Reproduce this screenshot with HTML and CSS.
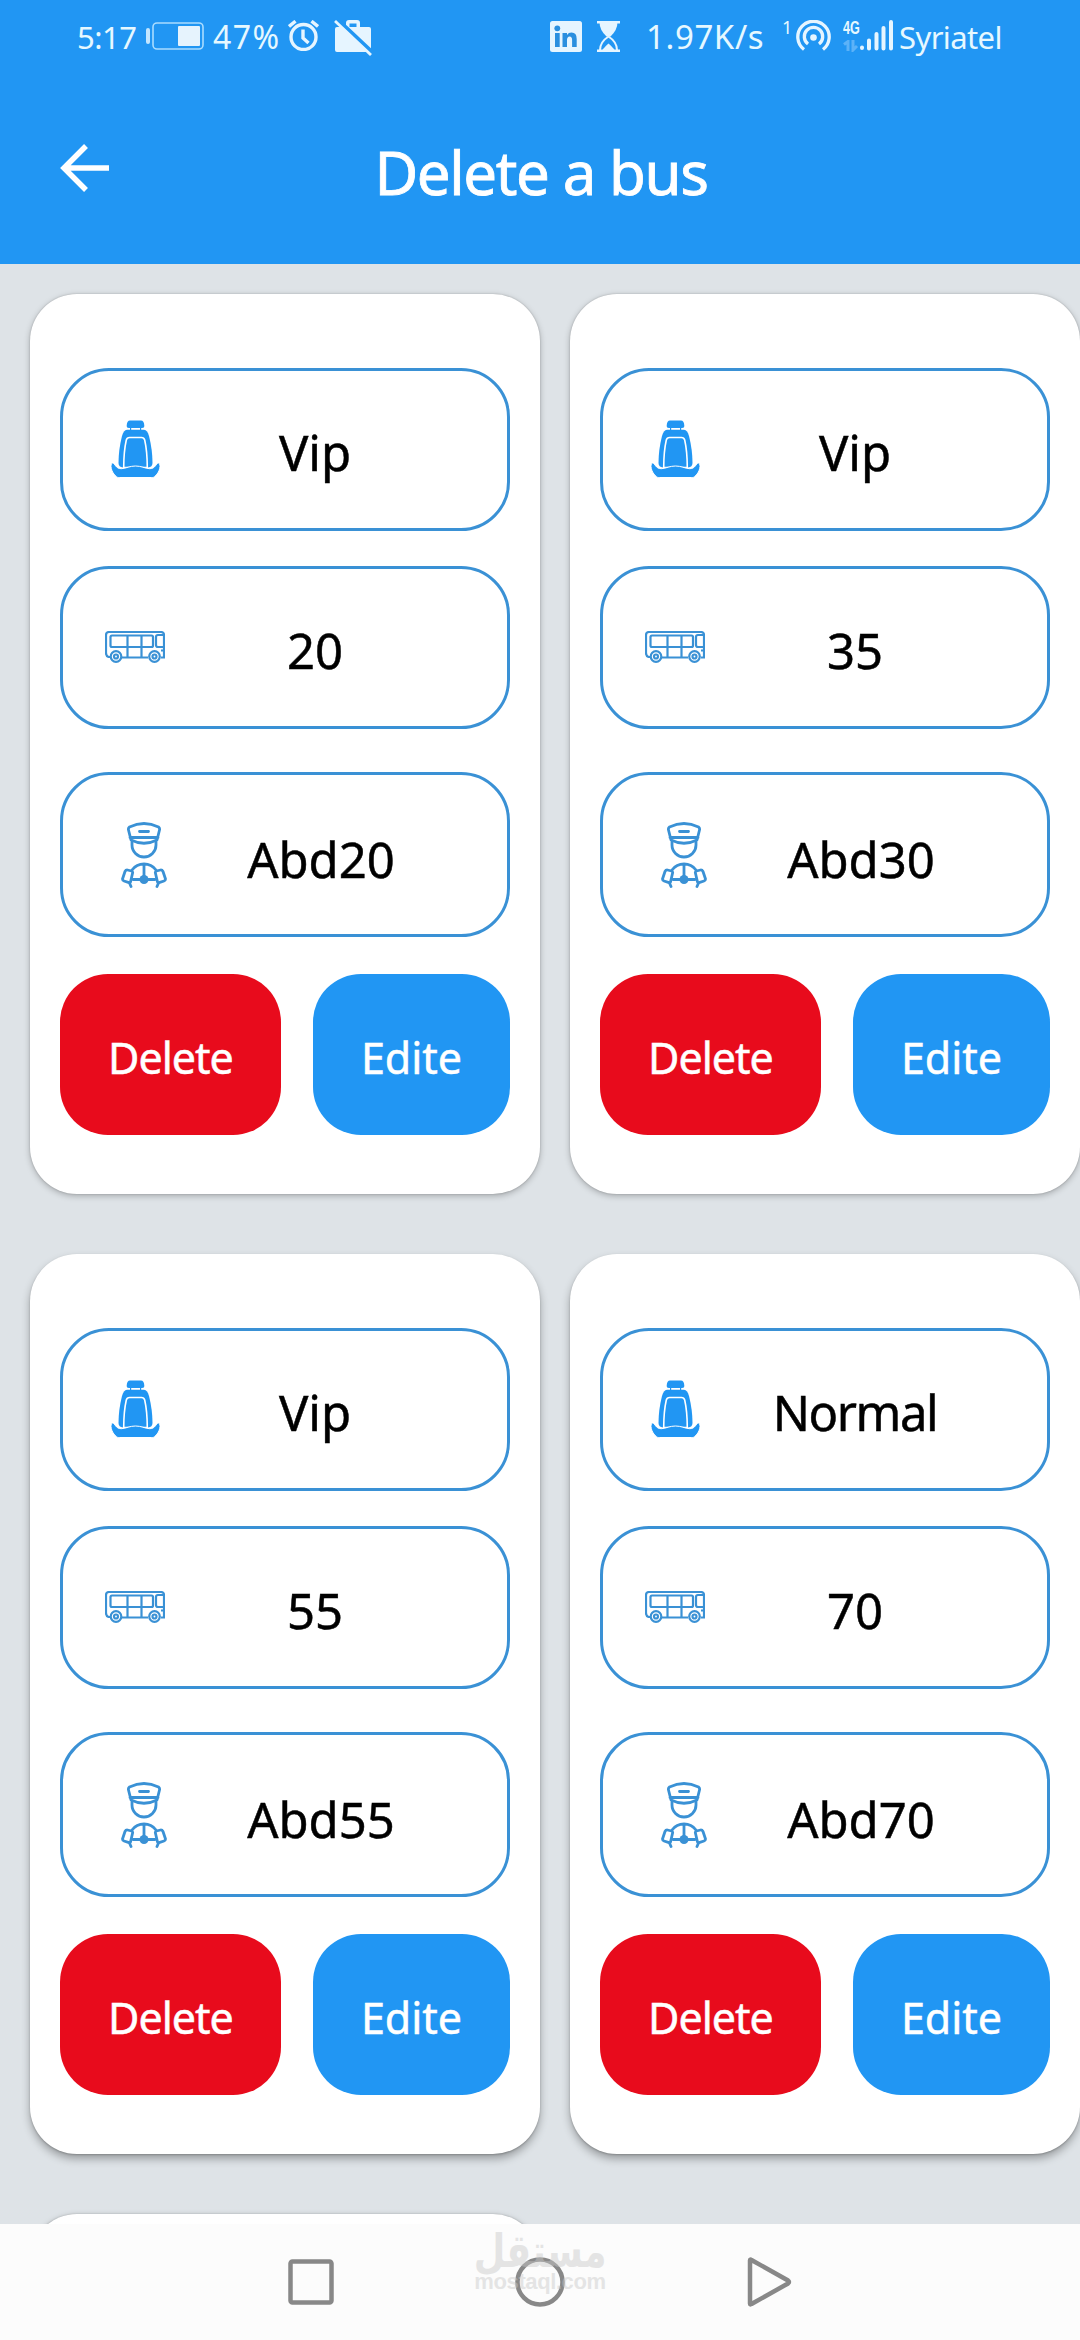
FILE: index.html
```html
<!DOCTYPE html>
<html lang="en">
<head>
  <meta charset="UTF-8" />
  <meta name="viewport" content="width=device-width, initial-scale=1.0"/>
  <title>Delete a bus</title>
  <link rel="stylesheet" href="styles.css">
</head>
<body>
  <!-- shared icons -->
  <svg class="sprite">
    <symbol id="seat" viewBox="0 0 49 58">
      <path d="M19 .5h11q3 0 3.300 5 .2 2.500-2.300 2.500h-13q-2.500 0-2.300-2.500.3-5 3.300-5z"/>
      <path d="M19 7h1.200v3H19zM29 7h1.200v3H29z"/>
      <path d="M16 9.700h17q3.500.3 5 6.300 3.500 14 3.500 27 0 4-4.500 4.500H12Q7.500 47 7.500 43q0-13 3.500-27 1.500-6 5-6.300z"/>
      <path d="M18.500 17.500h12q2.500 0 3.200 2.500 2.500 11 2.600 27.500H12.700q.1-16.500 2.600-27.500.7-2.500 3.200-2.500z" stroke="#fff" stroke-width="1.600"/>
      <path d="M1.500 43c2.500 0 3 6 9 5.700 5-.4 8-2.700 14-2.700s9 2.300 14 2.700c6 .3 6.500-5.700 9-5.700 3 1 1.500 9.500-4 13.700-1 .8-1.500.8-3 .8h-32c-1.500 0-2 0-3-.8-5.500-4.200-7-12.700-4-13.700z" stroke="#fff" stroke-width="1"/>
    </symbol>
    <symbol id="bus" viewBox="0 0 60 32">
      <g fill="none" stroke="currentColor" stroke-width="2.200">
        <path d="M5 26H3.500Q1 25 1 22V4q0-3 3-3h52q3 0 3 3v22.500h-3M16 26.500h27"/>
        <path d="M7 4.500h39.500q1.500 0 1.500 1.500v8.500q0 1.500-1.500 1.500H7q-1.500 0-1.500-1.500V6q0-1.500 1.500-1.500zM22.500 4.500v22M36.500 4.500v22M59 4h-6q-2 0-2 2v8q0 2 2 2h6M59 19.500h-3"/>
        <circle cx="11" cy="25.500" r="5.300"/><circle cx="11" cy="25.500" r="2"/>
        <circle cx="49.500" cy="25.500" r="5.300"/><circle cx="49.500" cy="25.500" r="2"/>
      </g>
    </symbol>
    <symbol id="driver" viewBox="0 0 46 66">
      <g fill="none" stroke="currentColor" stroke-width="2.800" stroke-linecap="round" stroke-linejoin="round">
        <path d="M8.500 5q14.500-7 29 0 1.500 1 1 3l-2.500 10q-13 6.500-26 0L7.500 8q-.5-2 1-3zM9 15.500h28M18.500 9.500h9"/>
        <path d="M11 20v3a12 12 0 0 0 24 0V20"/>
        <path d="M11 48a15 15 0 0 1 24 0M23 42v15M12 57.500h22"/>
        <path d="M6.500 48l4 1q1.200.3 1.200 1.500L9.500 60q-.4 1-1.500.7L3 59q-1.500-.5-1.500-2L4 49.500q1-1.800 2.500-1.500zM39.500 48l-4 1q-1.200.3-1.200 1.500l2.200 9.500q.4 1 1.500.7L43 59q1.500-.5 1.500-2L42 49.500q-1-1.800-2.500-1.500zM8.500 61l1.500 3.500M37.500 61 36 64.500"/>
      </g>
      <circle cx="23" cy="57.500" r="4.500"/>
    </symbol>
  </svg>

  <div class="statusbar">
    <span class="clock">5:17</span>
    <svg class="battery" width="58" height="28" viewBox="0 0 58 28">
      <rect x="0" y="6" width="4" height="16" rx="2" fill="#c3e6ff"/>
      <rect x="7" y="1" width="50" height="26" rx="4" fill="none" stroke="#a9dcff" stroke-width="1.600"/>
      <rect x="32" y="4" width="22" height="20" rx="1" fill="#e6f3fd"/>
    </svg>
    <span class="percent">47%</span>
    <svg class="alarm" width="31" height="31" viewBox="0 0 31 31" fill="none" stroke="#e6f5ff" stroke-width="3.400">
      <circle cx="15.500" cy="17" r="12.500"/>
      <path d="M1 6.500 7.500 1.200M30 6.500 23.500 1.200M15 9.500V18l5.500 5"/>
    </svg>
    <svg class="case" width="38" height="36" viewBox="0 0 38 36" fill="#e6f5ff">
      <path d="M3 7h9V3q0-3 3-3h8q3 0 3 3v4h9q2 0 2 2v21q0 2-2 2H3q-2 0-2-2V9q0-2 2-2zM15.500 7h7V3.500h-7z" fill-rule="evenodd"/>
      <path d="M3-1l36 34" stroke="#2196f3" stroke-width="4"/>
      <path d="M1 1l36 34" stroke="#e6f5ff" stroke-width="2.800"/>
    </svg>
    <svg class="linkedin" width="32" height="31" viewBox="0 0 32 31">
      <rect width="32" height="31" rx="2.500" fill="#e6f5ff"/>
      <g fill="#2a8fdf"><circle cx="7.300" cy="7.300" r="2.900"/><path d="M5 12h4.700v14H5zM12.500 12H17v2q1.500-2.400 4.500-2.400 5.200 0 5.200 6.400v8h-4.600v-7q0-3.500-2.500-3.500T17 19v7h-4.500z"/></g>
    </svg>
    <svg class="glass" width="23" height="31" viewBox="0 0 23 31">
      <path d="M0 1.200h23M0 29.800h23" stroke="#e6f5ff" stroke-width="2.400"/>
      <path d="M2.500 1h18q0 8-7 14.500h-4Q2.500 9 2.500 1z" fill="#e6f5ff"/>
      <path d="M3 29q0-8 8.500-13.500Q20 21 20 29" fill="none" stroke="#e6f5ff" stroke-width="2"/>
      <path d="M5.500 29q1-2 6-6.500 5 4.500 6 6.500z" fill="#e6f5ff"/>
    </svg>
    <span class="speed">1.97K/s</span>
    <span class="count">1</span>
    <svg class="hotspot" width="35" height="32" viewBox="0 0 35 32" fill="none" stroke="#e6f5ff" stroke-width="3.300">
      <path d="M8 29.500a15.700 15.700 0 1 1 19 0"/>
      <path d="M12 24a9.200 9.200 0 1 1 11 0"/>
      <circle cx="17.500" cy="17.500" r="3.300" fill="#e6f5ff" stroke="none"/>
    </svg>
    <div class="network">
      <span>4G</span>
      <svg width="17" height="12" viewBox="0 0 17 12" fill="none" stroke="#5cb2f8" stroke-width="3"><path d="M1 4.500l4-3V11M10 0v10l4-4"/></svg>
    </div>
    <svg class="signal" width="33" height="31" viewBox="0 0 33 31" stroke="#e6f5ff" stroke-width="4" stroke-linecap="round">
      <path d="M2 27.500v.5M9 20.500V28.500M16.500 14v14.500M23.500 8v20.500M31 2v26.500"/>
    </svg>
    <span class="carrier">Syriatel</span>
  </div>

  <header class="appbar">
    <svg class="back" width="50" height="48" viewBox="0 0 50 48" fill="none" stroke="#fff" stroke-width="5.500">
      <path d="M26 2 4 24l22 22M4 24h45"/>
    </svg>
    <h1>Delete a bus</h1>
  </header>

  <main class="bus-list">
    <div class="card">
      <div class="field"><div class="icon"><svg class="seat"><use href="#seat"/></svg></div><span>Vip</span></div>
      <div class="field"><div class="icon"><svg class="bus"><use href="#bus"/></svg></div><span>20</span></div>
      <div class="field field-driver"><div class="icon"><svg class="driver"><use href="#driver"/></svg></div><span>Abd20</span></div>
      <div class="actions">
        <button class="btn btn-delete">Delete</button>
        <button class="btn btn-edit">Edite</button>
      </div>
    </div>

    <div class="card">
      <div class="field"><div class="icon"><svg class="seat"><use href="#seat"/></svg></div><span>Vip</span></div>
      <div class="field"><div class="icon"><svg class="bus"><use href="#bus"/></svg></div><span>35</span></div>
      <div class="field field-driver"><div class="icon"><svg class="driver"><use href="#driver"/></svg></div><span>Abd30</span></div>
      <div class="actions">
        <button class="btn btn-delete">Delete</button>
        <button class="btn btn-edit">Edite</button>
      </div>
    </div>

    <div class="card card-low">
      <div class="field"><div class="icon"><svg class="seat"><use href="#seat"/></svg></div><span>Vip</span></div>
      <div class="field"><div class="icon"><svg class="bus"><use href="#bus"/></svg></div><span>55</span></div>
      <div class="field field-driver"><div class="icon"><svg class="driver"><use href="#driver"/></svg></div><span>Abd55</span></div>
      <div class="actions">
        <button class="btn btn-delete">Delete</button>
        <button class="btn btn-edit">Edite</button>
      </div>
    </div>

    <div class="card card-low">
      <div class="field"><div class="icon"><svg class="seat"><use href="#seat"/></svg></div><span class="tight">Normal</span></div>
      <div class="field"><div class="icon"><svg class="bus"><use href="#bus"/></svg></div><span>70</span></div>
      <div class="field field-driver"><div class="icon"><svg class="driver"><use href="#driver"/></svg></div><span>Abd70</span></div>
      <div class="actions">
        <button class="btn btn-delete">Delete</button>
        <button class="btn btn-edit">Edite</button>
      </div>
    </div>

    <div class="card"></div>
  </main>

  <nav class="navbar">
    <svg width="46" height="50" viewBox="0 0 46 50"><rect x="2.500" y="4.500" width="41" height="41" rx="2"/></svg>
    <svg width="50" height="50" viewBox="0 0 50 50"><circle cx="25" cy="25" r="22.500"/></svg>
    <svg width="46" height="50" viewBox="0 0 46 50"><path d="M4 3.500v43q0 1.500 1.500.5L42 26.500q2-1.500 0-3L5.500 3Q4 2 4 3.500z"/></svg>
    <div class="watermark">
      <span class="wm-ar" lang="ar">مستقل</span>
      <span class="wm-en">mostaql.com</span>
    </div>
  </nav>
</body>
</html>
```
FILE: styles.css
```css
* {
  box-sizing: border-box;
}

body {
  margin: 0;
  width: 1080px;
  height: 2340px;
  overflow: hidden;
  display: flex;
  flex-direction: column;
  background-color: #dee3e7;
  font-family: 'Noto Sans', 'Open Sans', sans-serif;
  color: #000;
}

.sprite {
  display: none;
}

/* status bar */
.statusbar {
  height: 76px;
  flex-shrink: 0;
  display: flex;
  align-items: flex-start;
  padding: 20px 0 0 77px;
  background-color: #2196f3;
  color: #e6f8ff;
  font-size: 31px;
  line-height: 34px;
  white-space: nowrap;
}

.statusbar svg {
  flex-shrink: 0;
}

.clock {
  width: 69px;
  letter-spacing: -0.5px;
}

.battery {
  margin: 2px 9px 0 0;
}

.percent {
  width: 75px;
  font-size: 32px;
  letter-spacing: 1.5px;
}

.alarm {
  margin-right: 15px;
}

.case {
  margin-right: 178px;
}

.linkedin {
  margin: 1px 15px 0 0;
}

.glass {
  margin: 1px 26px 0 0;
}

.speed {
  width: 136px;
  font-size: 33px;
  letter-spacing: 0.6px;
}

.count {
  width: 14px;
  font-size: 18px;
  line-height: 14px;
}

.network {
  width: 17px;
  margin-left: 12px;
  display: flex;
  flex-direction: column;
  font: bold 18px/16px 'Liberation Sans', sans-serif;
}

.network span {
  transform: scaleX(0.7);
  transform-origin: left;
}

.network svg {
  margin-top: 4px;
}

.signal {
  margin-right: 6px;
}

.carrier {
  letter-spacing: -0.6px;
}

/* app bar */
.appbar {
  height: 188px;
  flex-shrink: 0;
  display: flex;
  align-items: flex-start;
  padding: 68px 60px 0;
  background-color: #2196f3;
  color: #fff;
}

.appbar h1 {
  flex: 1;
  margin: 0 48px 0 0;
  padding-top: 2px;
  text-align: center;
  font-size: 60px;
  font-weight: 400;
  line-height: 52px;
  letter-spacing: -1.4px;
  -webkit-text-stroke: 0.8px #fff;
}

/* cards */
.bus-list {
  flex: 1;
  min-height: 0;
  overflow: hidden;
  display: grid;
  grid-template-columns: 510px 510px;
  grid-auto-rows: 900px;
  gap: 60px 30px;
  padding: 30px 0 0 30px;
}

.card {
  padding: 74px 30px 0;
  border-radius: 47px;
  background-color: #fff;
  box-shadow: 0 2px 6px rgba(0, 0, 0, 0.25), 0 0 2px rgba(0, 0, 0, 0.2);
}

.card-low {
  box-shadow: 0 5px 9px rgba(0, 0, 0, 0.3), 0 1px 2px rgba(0, 0, 0, 0.2);
}

.field {
  height: 163px;
  margin-bottom: 35px;
  padding: 5px 57px 0 0;
  display: flex;
  align-items: center;
  border: 3px solid #3a91d5;
  border-radius: 49px;
  font-size: 49px;
}

.icon {
  width: 117px;
  height: 100%;
  flex-shrink: 0;
  color: #3a91d5;
  fill: currentColor;
}

.icon svg {
  display: block;
}

.field span {
  flex: 1;
  text-align: center;
  white-space: nowrap;
  -webkit-text-stroke: 0.5px #000;
}

.field .tight {
  letter-spacing: -1.4px;
}

.seat {
  width: 49px;
  height: 58px;
  margin: 44px 0 0 48px;
  color: #2196f3;
}

.bus {
  width: 60px;
  height: 32px;
  margin: 57px 0 0 42px;
}

.driver {
  width: 46px;
  height: 66px;
  margin: 38px 0 0 58px;
}

.field-driver {
  height: 165px;
  margin-top: 43px;
  margin-bottom: 37px;
  padding-top: 9px;
}

.field-driver .icon {
  width: 129px;
}

.actions {
  display: flex;
  gap: 32px;
}

.btn {
  height: 161px;
  padding: 5px 0 0;
  border: 0;
  border-radius: 48px;
  color: #fff;
  font-family: inherit;
  font-size: 43px;
  -webkit-text-stroke: 0.5px #fff;
}

.btn-delete {
  width: 221px;
  background-color: #e80b1c;
  letter-spacing: -1px;
}

.btn-edit {
  width: 197px;
  background-color: #2196f3;
}

/* system navigation */
.navbar {
  position: relative;
  height: 116px;
  flex-shrink: 0;
  display: flex;
  justify-content: center;
  gap: 181px;
  padding-top: 33px;
  background-color: #fcfcfc;
}

.navbar > svg {
  fill: none;
  stroke: #888;
  stroke-width: 4.5;
}

.watermark {
  position: absolute;
  left: 440px;
  top: 4px;
  width: 200px;
  display: flex;
  flex-direction: column;
  align-items: center;
  color: #c8c8c8;
  opacity: 0.45;
}

.wm-ar {
  font: bold 46px/46px 'DejaVu Sans', sans-serif;
  transform: scaleX(0.79);
}

.wm-en {
  font: bold 22px/16px 'Liberation Sans', sans-serif;
  letter-spacing: -0.4px;
}
```
